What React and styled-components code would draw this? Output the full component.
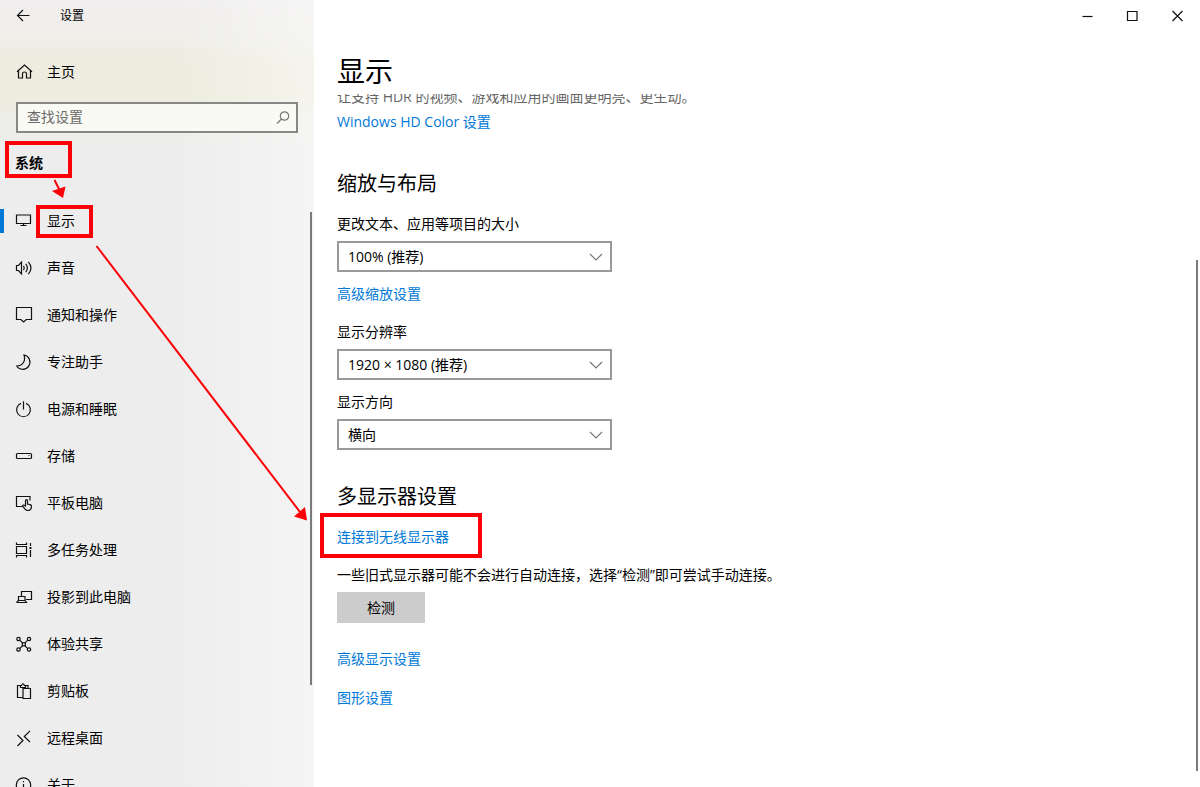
import React, { useState } from "react";
import styled, { createGlobalStyle } from "styled-components";

const GlobalStyle = createGlobalStyle`
    * {
        box-sizing: border-box;
    }

    body {
        margin: 0;
        color: #000;
        background: #fff;
        font-family: "Open Sans", "Noto Sans CJK SC", sans-serif;
        font-size: 14px;
        line-height: 20px;
    }

    h1, h2, p, ul {
        margin: 0;
        padding: 0;
        font-weight: 400;
    }

    button, input, select {
        font: inherit;
        color: inherit;
    }
`;

const Window = styled.div`
    position: relative;
    display: flex;
    height: 100vh;
    overflow: hidden;
`;

const Sidebar = styled.aside`
    position: relative;
    flex: 0 0 314px;
    display: flex;
    flex-direction: column;
    background:
        linear-gradient(to right, rgba(255, 255, 255, 0) 55%, rgba(255, 255, 255, 0.45)),
        linear-gradient(#f0eeee, #efeeea 32px, #edecdf 64px, #edecde 96px, #eeeeea 124px, #ededed 150px);
`;

const TitleBar = styled.div`
    display: flex;
    align-items: center;
    gap: 28px;
    height: 32px;
    padding-left: 16px;
    font-size: 12px;
`;

const IconButton = styled.button`
    display: flex;
    padding: 0;
    border: 0;
    background: none;
`;

const HomeLink = styled.a`
    display: flex;
    align-items: center;
    gap: 15px;
    height: 48px;
    margin: 16px 0 6px;
    padding-left: 16px;
    color: inherit;
    text-decoration: none;
`;

const SearchBox = styled.label`
    display: flex;
    align-items: center;
    height: 31px;
    margin: 0 16px;
    padding: 0 5px 0 9px;
    border: 2px solid #878784;
    background: #fafaf5;

    input {
        flex: 1;
        min-width: 0;
        padding: 0 0 2px;
        border: 0;
        outline: 0;
        background: none;
    }

    input::placeholder {
        color: #6b6b6b;
        opacity: 1;
    }
`;

const GroupTitle = styled.h2`
    position: relative;
    margin: 20px 0 24px;
    padding-left: 15px;
    font-size: 14px;
    font-weight: 700;
    line-height: 20px;
`;

const NavList = styled.ul`
    flex: 1;
    min-height: 0;
    overflow: hidden;
    list-style: none;
`;

const NavLink = styled.a`
    position: relative;
    display: flex;
    align-items: center;
    gap: 15px;
    height: 47px;
    padding-left: 16px;
    color: inherit;
    text-decoration: none;

    &::before {
        content: "";
        position: absolute;
        left: 0;
        width: 4px;
        height: 24px;
        background: ${props => (props.$active ? "#0078d7" : "transparent")};
    }
`;

const Main = styled.main`
    position: relative;
    flex: 1;
    min-width: 0;
    display: flex;
    flex-direction: column;
`;

const WindowControls = styled.div`
    display: flex;
    justify-content: flex-end;

    button {
        justify-content: center;
        align-items: center;
        width: 45px;
        height: 32px;
    }
`;

const PageTitle = styled.h1`
    padding: 19px 23px 3px;
    font-size: 28px;
    line-height: 40px;
`;

const Page = styled.div`
    flex: 1;
    min-height: 0;
    padding: 0 23px;
    overflow: hidden;
`;

/* the page is shown partly scrolled, under its title */
const Scrolled = styled.div`
    margin-top: -7px;
`;

const Section = styled.section`
    display: flex;
    flex-direction: column;
    align-items: flex-start;
    margin-bottom: ${props => props.$space || 33}px;
`;

const SectionTitle = styled.h2`
    margin-bottom: 16px;
    font-size: 20px;
    line-height: 28px;
`;

const Hint = styled.p`
    color: ${props => (props.$muted ? "#666" : "#000")};
    margin-bottom: ${props => (props.$muted ? 5 : 7)}px;
`;

const TextLink = styled.a`
    position: relative;
    margin-bottom: ${props => props.$space || 0}px;
    color: #0078d7;
    text-decoration: none;
`;

const Field = styled.div`
    display: flex;
    flex-direction: column;
    gap: 7px;
    width: 275px;
    margin-bottom: ${props => (props.$last ? 0 : 12)}px;
`;

const SelectWrap = styled.div`
    position: relative;

    select {
        display: block;
        width: 100%;
        height: 31px;
        padding: 0 32px 0 9px;
        border: 2px solid #999;
        border-radius: 0;
        background: #fff;
        appearance: none;
    }

    svg {
        position: absolute;
        top: 8px;
        right: 8px;
        pointer-events: none;
    }
`;

const Button = styled.button`
    width: 88px;
    height: 31px;
    margin-bottom: 26px;
    padding: 0;
    border: 0;
    background: #ccc;
`;

const ScrollThumb = styled.div`
    position: absolute;
    top: ${props => props.$top}%;
    right: 2px;
    width: 2px;
    height: ${props => props.$length}%;
    background: #7a7a7a;
`;

const Mark = styled.span`
    position: absolute;
    inset: ${props => props.$inset};
    width: ${props => props.$width}px;
    border: 4px solid #fb0007;
    pointer-events: none;
`;

const Arrows = styled.svg`
    position: absolute;
    top: 0;
    left: 0;
    pointer-events: none;
`;

function Icon({ children, color = "#111" }) {
    return (
        <svg width="16" height="16" viewBox="0 0 16 16" fill="none" stroke={color} strokeWidth="1.2" overflow="visible" aria-hidden="true">
            {children}
        </svg>
    )
}

const navItems = [
    {
        name: "显示",
        icon: <path d="M.5 2h14v8.500H.5zM7.500 10.500v2M4.500 12.500h6" />
    },
    {
        name: "声音",
        icon: <path d="M.5 5.500h2L5.500 2v12l-3-3.500h-2zM7.500 5.800q1.600 2.200 0 4.400M9.800 3.800q3.200 4.200 0 8.400M12.300 1.800q5.400 6.200 0 12.400" />
    },
    {
        name: "通知和操作",
        icon: <path d="M.5.5h15v12H10.300L7.600 15 4.900 12.500H.5z" />
    },
    {
        name: "专注助手",
        icon: <path d="M8 1A7.200 7.200 0 1 1 .7 12C6.500 12 10 7 8 1z" />
    },
    {
        name: "电源和睡眠",
        icon: <path d="M5 2.400a6.900 6.900 0 1 0 5 0M7.500.3v8.200" />
    },
    {
        name: "存储",
        icon: <><rect x=".5" y="5.500" width="15" height="5" rx="1" /><path d="M12.500 7.500h1" /></>
    },
    {
        name: "平板电脑",
        icon: <path d="M6 11.500H.5v-10h13.500v4M9.500 11V5.700a1 1 0 0 1 2 0V9l2.600.6q1.400.4 1.400 1.800-.2 4.100-3.600 4.100-1.800 0-2.800-1.400L6.600 11.200q-.2-1.600 1.400-1z" />
    },
    {
        name: "多任务处理",
        icon: <><path d="M.5 4.500h10v7H.5zM.5.5v2h10v-2M.5 15.500v-2h10v2M14.500 1v3M14.500 8v7" /><path d="M13.500 6h2" strokeWidth="2" /></>
    },
    {
        name: "投影到此电脑",
        icon: <path d="M5.500 7V2.500h10v8H10M2.500 7.500h6.500v4H2.500zM.5 13.500H10.500l-1.500-2M.5 13.500l2-2" />
    },
    {
        name: "体验共享",
        icon: <><circle cx="2.500" cy="3" r="1.700" /><circle cx="13" cy="3" r="1.700" /><circle cx="2.500" cy="13.500" r="1.700" /><circle cx="13" cy="13.500" r="1.700" /><path d="M4 4.300l2.500 2.500M11.500 4.300L9 6.800M4 12.300l2.500-2.500M11.500 12.300L9 9.800" /><rect x="6.300" y="6.800" width="3" height="3" /></>
    },
    {
        name: "剪贴板",
        icon: <path d="M6.500 14.500h-5v-12h3M9.500 2.500h2.500v3M4.500 4.500v-2h1q1.500-3.200 3 0h1v2zM7 5.500h7.500v10H7z" />
    },
    {
        name: "远程桌面",
        icon: <path d="M1.500 5l5.500 5.500L1.500 16M14 .8L8.300 6.500 14 12" />
    },
    {
        name: "关于",
        icon: <><circle cx="7.500" cy="8" r="7.200" /><path d="M7.500 7v5M7.500 4v1.200" /></>
    },
]

function Select({ id, label, options, last }) {
    const [value, setValue] = useState(options[0])

    return (
        <Field $last={last}>
            <label htmlFor={id}>{label}</label>
            <SelectWrap>
                <select id={id} value={value} onChange={evt => setValue(evt.target.value)}>
                    {options.map(option => <option key={option}>{option}</option>)}
                </select>
                <Icon color="#777"><path d="M2 5l6 6 6-6" /></Icon>
            </SelectWrap>
        </Field>
    )
}

export default function App() {
    const [search, setSearch] = useState("")

    return (
        <>
            <GlobalStyle />
            <Window>
                <Sidebar>
                    <TitleBar>
                        <IconButton aria-label="返回">
                            <Icon><path d="M13.500 7.500h-12M7 2L1.500 7.500 7 13" /></Icon>
                        </IconButton>
                        <span>设置</span>
                    </TitleBar>

                    <HomeLink href="#home">
                        <Icon><path d="M1 7.800L8.500 1 16 7.800M2.500 6.500v7.500h4V9.500q0-1.500 2-1.500t2 1.500V14h4V6.500" /></Icon>
                        主页
                    </HomeLink>

                    <SearchBox>
                        <input
                            type="text"
                            aria-label="查找设置"
                            placeholder="查找设置"
                            value={search}
                            onChange={evt => setSearch(evt.target.value)}
                        />
                        <Icon color="#777"><circle cx="9.500" cy="6" r="4.200" /><path d="M6.500 9L2 13.500" /></Icon>
                    </SearchBox>

                    <GroupTitle>
                        系统
                        <Mark $inset="-12px auto -5px 5px" $width={67} />
                    </GroupTitle>

                    <NavList>
                        {navItems.map((item, index) => (
                            <li key={item.name}>
                                <NavLink href={`#nav-${index}`} $active={index === 0}>
                                    <Icon>{item.icon}</Icon>
                                    {item.name}
                                    {index === 0 && <Mark $inset="8px auto 6px 36px" $width={57} />}
                                </NavLink>
                            </li>
                        ))}
                    </NavList>
                    <ScrollThumb $top={27} $length={60} />
                </Sidebar>

                <Main>
                    <WindowControls>
                        <IconButton aria-label="最小化">
                            <Icon><path d="M2.500 8.500h10" /></Icon>
                        </IconButton>
                        <IconButton aria-label="最大化">
                            <Icon><path d="M2.500 3.500h9.500v9H2.500z" /></Icon>
                        </IconButton>
                        <IconButton aria-label="关闭">
                            <Icon><path d="M2.500 3l10 10M12.500 3L2.500 13" /></Icon>
                        </IconButton>
                    </WindowControls>
                    <PageTitle>显示</PageTitle>

                    <Page>
                        <Scrolled>
                            <Section $space={38}>
                                <Hint $muted>让支持 HDR 的视频、游戏和应用的画面更明亮、更生动。</Hint>
                                <TextLink href="#hd-color">Windows HD Color 设置</TextLink>
                            </Section>

                            <Section>
                                <SectionTitle>缩放与布局</SectionTitle>
                                <Select id="scale" label="更改文本、应用等项目的大小" options={["100% (推荐)", "125%", "150%"]} />
                                <TextLink href="#scaling" $space={18}>高级缩放设置</TextLink>
                                <Select id="resolution" label="显示分辨率" options={["1920 × 1080 (推荐)", "1680 × 1050", "1280 × 720"]} />
                                <Select id="orientation" label="显示方向" options={["横向", "纵向"]} last />
                            </Section>

                            <Section>
                                <SectionTitle>多显示器设置</SectionTitle>
                                <TextLink href="#wireless" $space={18}>
                                    连接到无线显示器
                                    <Mark $inset="-14px auto -11px -17px" $width={162} />
                                </TextLink>
                                <Hint>一些旧式显示器可能不会进行自动连接，选择“检测”即可尝试手动连接。</Hint>
                                <Button>检测</Button>
                                <TextLink href="#advanced" $space={19}>高级显示设置</TextLink>
                                <TextLink href="#graphics">图形设置</TextLink>
                            </Section>
                        </Scrolled>
                    </Page>
                    <ScrollThumb $top={33} $length={65} />
                </Main>

                <Arrows width="314" height="530" fill="#fb0007" stroke="#fb0007" aria-hidden="true">
                    <path d="M54.500 180l5 10" strokeWidth="2" />
                    <path d="M63 198L52 191l13.500-4.500z" stroke="none" />
                    <path d="M96.500 246L300 512" strokeWidth="2" />
                    <path d="M307 520.500l-13-4 11-9.500z" stroke="none" />
                </Arrows>
            </Window>
        </>
    )
}
